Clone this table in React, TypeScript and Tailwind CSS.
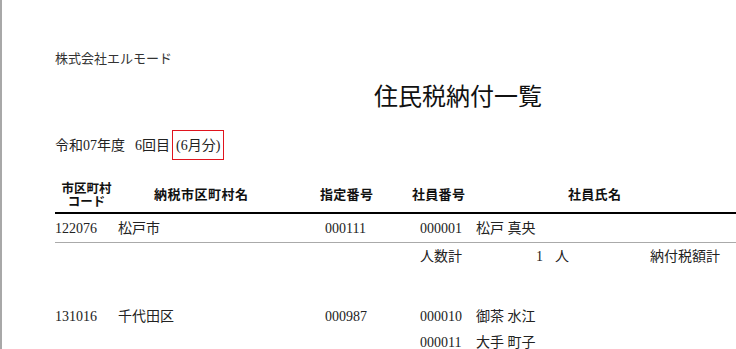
import * as React from "react";

const serif = "font-['Liberation_Serif','Noto_Sans_CJK_JP',serif]";
const sans = "font-['Noto_Sans_CJK_JP',sans-serif]";

interface Row {
  code?: string;
  city?: string;
  designated?: string;
  empNo: string;
  name: string;
}

const group1: Row[] = [
  { code: "122076", city: "松戸市", designated: "000111", empNo: "000001", name: "松戸 真央" },
];

const group2: Row[] = [
  { code: "131016", city: "千代田区", designated: "000987", empNo: "000010", name: "御茶 水江" },
  { empNo: "000011", name: "大手 町子" },
];

function DataRow({ row, height }: { row: Row; height: string }) {
  return (
    <div className={`flex shrink-0 items-center ${height} text-[14px] text-[#222] ${serif}`}>
      <div className="w-[63px]">{row.code}</div>
      <div className="w-[207px]">{row.city}</div>
      <div className="w-[95px]">{row.designated}</div>
      <div className="w-[56px]">{row.empNo}</div>
      <div>{row.name}</div>
    </div>
  );
}

export default function App() {
  return (
    <div className="flex h-[349px] w-[736px] overflow-hidden bg-white">
      <div className="w-[2px] shrink-0 bg-[#a8a8a8]" />
      <div className="min-w-0 flex-1 pl-[53px]">
        <div className={`pt-[49px] text-[13px] leading-[20px] text-[#333] ${serif}`}>
          株式会社エルモード
        </div>

        <div className={`mt-[10px] pl-[319px] text-[24px] leading-[32px] text-[#111] ${sans}`}>
          住民税納付一覧
        </div>

        <div className={`mt-[19px] flex h-[30px] items-center text-[14px] text-[#222] ${serif}`}>
          <span>令和07年度</span>
          <span className="ml-[10px]">6回目</span>
          <span className="ml-[2px] flex h-[30px] items-center border border-[#e0141e] px-[3px]">
            (6月分)
          </span>
        </div>

        <div className={`mt-[21px] flex h-[26px] items-center text-[13px] font-bold text-[#111] ${sans}`}>
          <div className="flex w-[63px] flex-col items-center text-[12.5px] leading-[13.5px]">
            <span>市区町村</span>
            <span>コード</span>
          </div>
          <div className="w-[202px] pl-[36px] tracking-[0.5px]">納税市区町村名</div>
          <div className="w-[92px] tracking-[0.3px]">指定番号</div>
          <div className="w-[156px] tracking-[0.3px]">社員番号</div>
          <div className="tracking-[0.3px]">社員氏名</div>
        </div>

        <div className="mt-[5px] h-[2px] bg-black" />

        {group1.map((r) => (
          <DataRow key={r.empNo} row={r} height="h-[28px]" />
        ))}

        <div className="h-px bg-[#aaa]" />

        <div className={`flex h-[26px] items-center text-[14px] text-[#222] ${serif}`}>
          <div className="w-[365px]" />
          <div className="w-[116px]">人数計</div>
          <div className="w-[114px]">
            1<span className="ml-[12px]">人</span>
          </div>
          <div>納付税額計</div>
        </div>

        <div className="mt-[34px]">
          {group2.map((r) => (
            <DataRow key={r.empNo} row={r} height="h-[26px]" />
          ))}
        </div>
      </div>
    </div>
  );
}
